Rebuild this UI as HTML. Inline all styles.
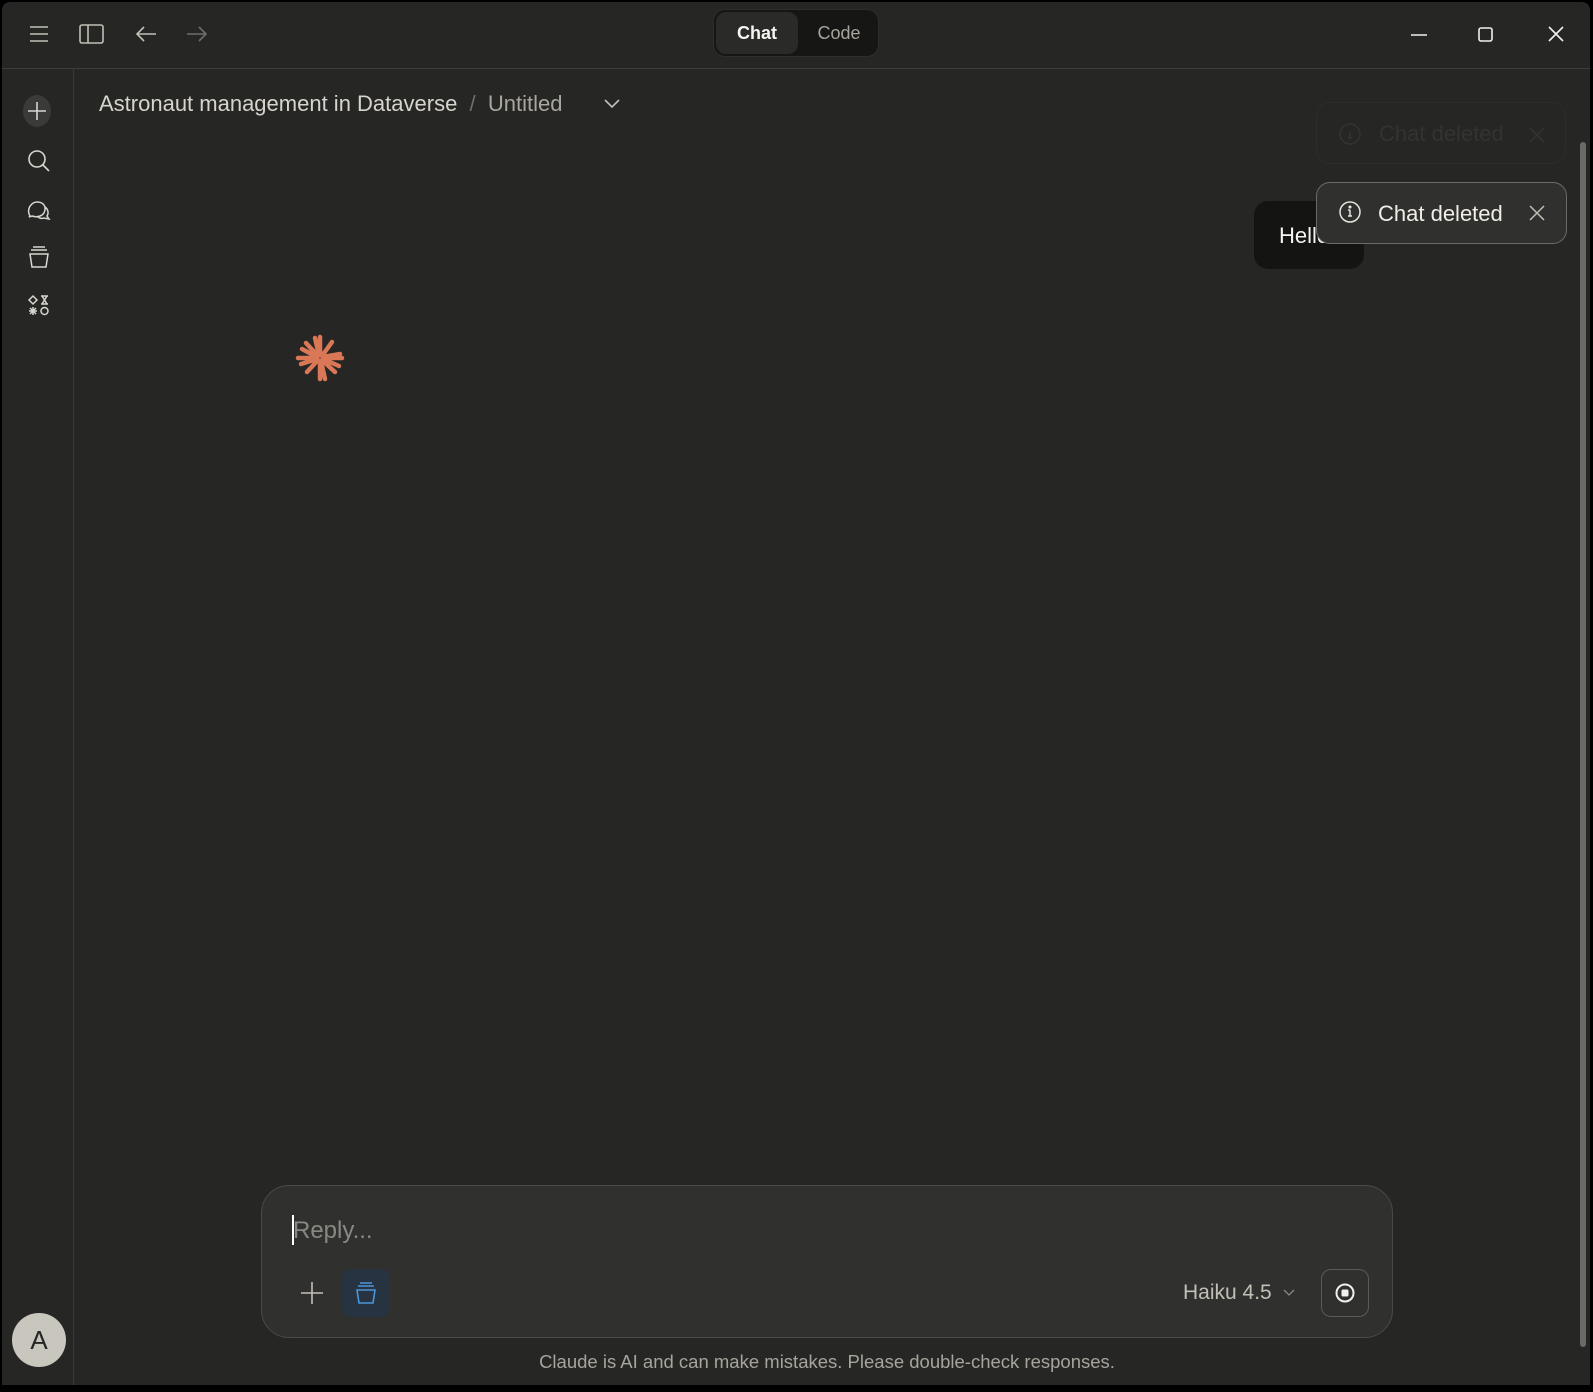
<!DOCTYPE html>
<html><head><meta charset="utf-8"><style>
*{margin:0;padding:0;box-sizing:border-box}
html,body{width:1593px;height:1392px;background:#000;overflow:hidden;font-family:"Liberation Sans",sans-serif}
.win{position:absolute;left:2px;top:2px;width:1588px;height:1383px;background:#262624;border-radius:8px 8px 0 0;overflow:hidden}
.top{position:absolute;left:0;top:0;right:0;height:67px;border-bottom:1px solid #3d3d3a}
.side{position:absolute;left:0;top:67px;width:72px;bottom:0;border-right:1px solid #3a3a37}
svg{position:absolute;overflow:visible}
.ab{position:absolute;white-space:nowrap}
</style></head><body>
<div class="win">
<div class="top">
<svg style="left:26px;top:22px" width="22" height="20" fill="none" stroke="#c2c0b6" stroke-width="1.6"><path d="M2 3h18M2 10h18M2 17h18"/></svg>
<svg style="left:77px;top:22px" width="26" height="20" fill="none" stroke="#c2c0b6" stroke-width="1.6"><rect x="1" y="1" width="23" height="18" rx="2"/><path d="M9 1v18"/></svg>
<svg style="left:133px;top:22px" width="22" height="20" fill="none" stroke="#c2c0b6" stroke-width="1.6"><path d="M21 10H2M9 3L2 10l7 7"/></svg>
<svg style="left:184px;top:22px" width="22" height="20" fill="none" stroke="#6f6e69" stroke-width="1.6"><path d="M1 10h19M13 3l7 7-7 7"/></svg>
<div class="ab" style="left:711px;top:7px;width:166px;height:48px;background:#161615;border-radius:12px;border:1px solid #2e2e2c"></div>
<div class="ab" style="left:714px;top:10px;width:82px;height:42px;background:#2a2a28;border-radius:10px"></div>
<div class="ab" style="left:714px;top:21px;width:82px;text-align:center;color:#f5f4ef;font-size:18px;font-weight:bold">Chat</div>
<div class="ab" style="left:797px;top:21px;width:80px;text-align:center;color:#a6a49c;font-size:18px">Code</div>
<svg style="left:1407px;top:22px" width="20" height="20" stroke="#f0f0f0" stroke-width="1.6"><path d="M2 11h16"/></svg>
<svg style="left:1476px;top:25px" width="16" height="16" fill="none" stroke="#f0f0f0" stroke-width="1.6"><rect x="1" y="1" width="13" height="13" rx="2"/></svg>
<svg style="left:1545px;top:23px" width="18" height="18" stroke="#f0f0f0" stroke-width="1.6"><path d="M2 2l14 14M16 2L2 16"/></svg>
</div>
<div class="side">
<div class="ab" style="left:21px;top:26px;width:28px;height:32px;border-radius:50%;background:#3a3a38"></div>
<svg style="left:26px;top:32px" width="20" height="20" stroke="#d8d6cf" stroke-width="1.6"><path d="M9 1v18M0 10h18"/></svg>
<svg style="left:25px;top:80px" width="24" height="24" fill="none" stroke="#d8d6cf" stroke-width="1.6"><circle cx="10" cy="10" r="8"/><path d="M16 16l6 6"/></svg>
<svg style="left:25px;top:129px" width="24" height="24" fill="none" stroke="#d8d6cf" stroke-width="1.5"><path d="M3 18c-2-3-2-8 1-11 3-4 10-4 13 0 2 3 1 8-2 10-3 2-7 2-10 1L2 19zM18 9c3 2 4 6 2 9l2 3-5-1c-2 1-5 0-6-1"/></svg>
<svg style="left:26px;top:177px" width="22" height="24" fill="none" stroke="#d8d6cf" stroke-width="1.5"><path d="M5 1h12M3 4h16M2 8h18l-2 13H4z"/></svg>
<svg style="left:26px;top:226px" width="22" height="22" fill="none" stroke="#d8d6cf" stroke-width="1.5"><path d="M5 1l4 4-4 4-4-4zM13 1h7M14 1l5 8M19 1l-5 8M13 9h7"/><circle cx="16.5" cy="16" r="3.5"/><path d="M5 12v8M1 16h8M2 13l6 6M8 13l-6 6"/></svg>
<div class="ab" style="left:10px;top:1244px;width:54px;height:54px;border-radius:50%;background:#c8c6bd;color:#262624;font-size:26px;text-align:center;line-height:54px">A</div>
</div>
<div class="ab" style="left:97px;top:89px;font-size:22px;color:#d6d4cc">Astronaut management in Dataverse<span style="color:#6f6e69">&nbsp; / &nbsp;</span><span style="color:#a8a69e">Untitled</span></div>
<svg style="left:602px;top:97px" width="16" height="10" fill="none" stroke="#c2c0b6" stroke-width="1.6"><path d="M1 1l7 7 7-7"/></svg>
<svg style="left:294px;top:332px" width="48" height="48" stroke="#d97757" stroke-width="4.5" stroke-linecap="round"><g transform="translate(24,24)">
<path d="M0-3V-21M0 3V21M-3 0H-22M3 0H22M-2-2L-14-15M2 2L15 14M2-2L12-16M-2 2L-13 14M-3-1L-18-9M3 1L19 8M-1-3L-5-20M1 3L5 21M3-1L20-4M-3 1L-19 6"/></g></svg>
<div class="ab" style="left:1252px;top:199px;width:110px;height:68px;background:#141413;border-radius:14px"></div>
<div class="ab" style="left:1277px;top:221px;font-size:22px;color:#f5f4ef">Hello</div>
<div class="ab" style="left:1314px;top:100px;width:250px;height:62px;border:1px solid #2c2c2a;border-radius:14px"></div>
<svg style="left:1337px;top:121px" width="24" height="24" fill="none" stroke="#34342f" stroke-width="1.5"><circle cx="11" cy="11" r="10"/><path d="M11 9v6M9 15h4"/></svg>
<div class="ab" style="left:1377px;top:119px;font-size:22px;color:#33332f">Chat deleted</div>
<svg style="left:1527px;top:125px" width="16" height="16" stroke="#34342f" stroke-width="1.5"><path d="M1 1l14 14M15 1L1 15"/></svg>
<div class="ab" style="left:1314px;top:180px;width:251px;height:62px;background:#30302e;border:1px solid #6c6b66;border-radius:14px"></div>
<svg style="left:1337px;top:199px" width="24" height="24" fill="none" stroke="#e6e4dc" stroke-width="1.5"><circle cx="11" cy="11" r="10"/><path d="M11 9v6M9 15h4M9 9h2"/><circle cx="11" cy="6" r=".8" fill="#e6e4dc"/></svg>
<div class="ab" style="left:1376px;top:199px;font-size:22px;color:#f0eee6">Chat deleted</div>
<svg style="left:1527px;top:203px" width="16" height="16" stroke="#c2c0b6" stroke-width="1.5"><path d="M1 1l14 14M15 1L1 15"/></svg>
<div class="ab" style="left:1578px;top:140px;width:6px;height:1205px;background:#6a6a66;border-radius:3px"></div>
<div class="ab" style="left:259px;top:1183px;width:1132px;height:153px;background:#30302e;border:1px solid #4a4a47;border-radius:28px"></div>
<div class="ab" style="left:290px;top:1213px;width:2px;height:30px;background:#fff"></div>
<div class="ab" style="left:291px;top:1215px;font-size:24px;color:#8a8882">Reply...</div>
<svg style="left:298px;top:1279px" width="24" height="24" stroke="#c2c0b6" stroke-width="1.6"><path d="M12 1v22M1 12h22"/></svg>
<div class="ab" style="left:340px;top:1267px;width:48px;height:48px;background:#273340;border-radius:9px"></div>
<svg style="left:353px;top:1280px" width="22" height="24" fill="none" stroke="#4a95d8" stroke-width="1.6"><path d="M5 1h12M3 4h16M2 8h18l-2 13H4z"/></svg>
<div class="ab" style="left:1181px;top:1279px;font-size:21px;color:#c2c0b6">Haiku 4.5</div>
<svg style="left:1281px;top:1287px" width="12" height="8" fill="none" stroke="#8a8882" stroke-width="1.3"><path d="M1 1l5 5 5-5"/></svg>
<div class="ab" style="left:1319px;top:1267px;width:48px;height:48px;border:1px solid #5a5a56;border-radius:10px"></div>
<svg style="left:1333px;top:1281px" width="20" height="20"><circle cx="10" cy="10" r="8.5" fill="none" stroke="#f0f0f0" stroke-width="2"/><rect x="6.5" y="6.5" width="7" height="7" rx="1.5" fill="#f0f0f0"/></svg>
<div class="ab" style="left:0;width:1650px;top:1349px;text-align:center;font-size:18.5px;color:#a6a49c">Claude is AI and can make mistakes. Please double-check responses.</div>
</div>
</body></html>
